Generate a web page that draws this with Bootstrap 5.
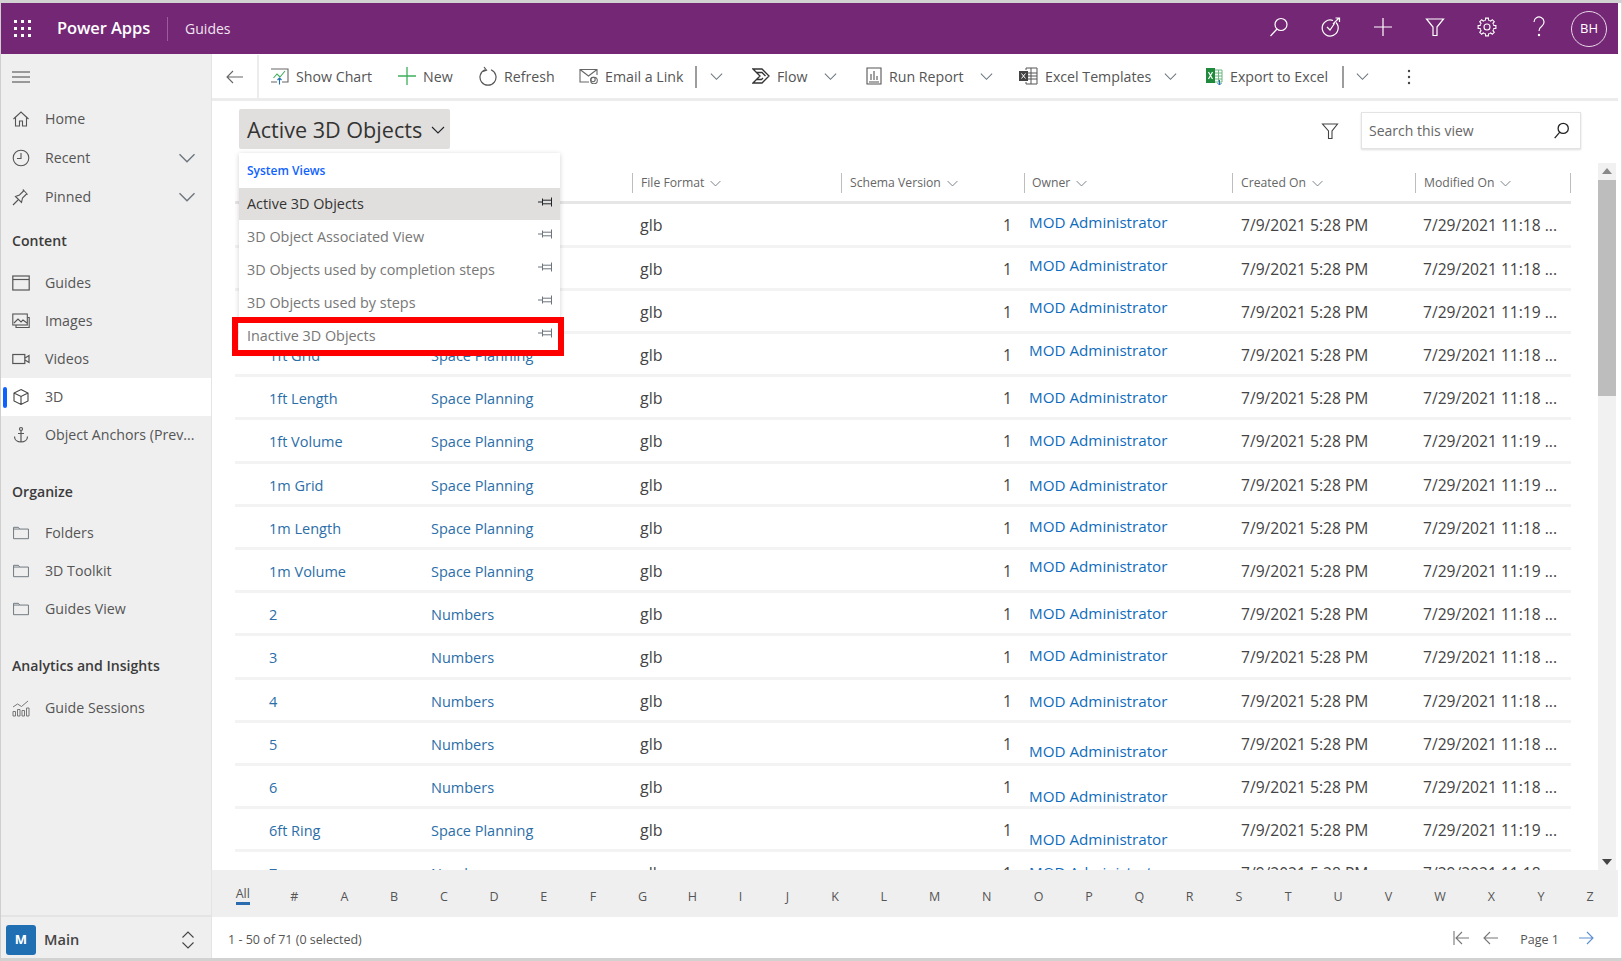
<!DOCTYPE html>
<html lang="en">
<head>
<meta charset="utf-8">
<title>Power Apps - Guides</title>
<link href="https://cdn.jsdelivr.net/npm/bootstrap@5.3.0/dist/css/bootstrap.min.css" rel="stylesheet">
<style>
html,body{margin:0;height:100%;background:#fff;overflow:hidden}
body{font-family:"Open Sans","Noto Sans",sans-serif;color:#444}
svg{display:block;flex:none}
.sprite{position:absolute}
.frame{width:1622px;height:961px;padding:3px 4px 3px 1px;background:#fff;box-shadow:inset 0 3px 0 #d2d2d2,inset 1px 0 0 #cfcfcf,inset 0 -3px 0 #d2d2d2,inset -1px 0 0 #dcdcdc}
.topbar{height:51px;background:#742774;color:#fff;padding-left:13px}
.brand{font-size:16.5px;font-weight:600;margin-left:25px;letter-spacing:-.1px}
.bdiv{width:1px;height:24px;background:#9a5f9a;margin:0 17px 0 17px}
.prod{font-size:14px;color:#f1e4f1}
.hico{width:52px;display:flex;justify-content:center;margin-bottom:3px}
.avatar{width:36px;height:36px;border:1.5px solid #e8d8e8;border-radius:50%;font-size:13px;margin:0 11px 0 6px}
.shell{height:904px}
.side{width:211px;background:#efefef;border-right:1px solid #e4e4e4;flex:none}
.burger{height:46px;padding-left:11px}
.sitem{height:38px;padding-left:11px;font-size:14.2px;color:#555}
.sitem .lbl{margin-left:15px;white-space:nowrap}
.tall{height:39px}
.shead{height:38px;padding-left:11px;font-size:14.1px;font-weight:600;color:#3b3b3b}
.sh1{margin-top:6px;margin-bottom:4px}
.sh2{margin-top:19px;margin-bottom:3px}
.sh3{margin-top:19px;margin-bottom:4px}
.sitem.on{background:#fff;position:relative;padding-left:11px}
.sitem.on::before{content:"";position:absolute;left:2px;top:9px;width:4px;height:21px;border-radius:2px;background:#0f62fe}
.schev{margin-left:auto;margin-right:14px}
.sfoot{height:43px;border-top:2px solid #e4e4e4;padding:5px 0 0 5px}
.mtile{width:30px;height:30px;background:#1f6fb2;color:#fff;border-radius:3px;font-size:13px;font-weight:700}
.mname{font-size:14.6px;font-weight:600;margin-left:8px;color:#444}
.tbar{height:47px;border-bottom:3px solid #ececec;display:grid;grid-template-columns:58px 128px 81px 100px 116px 14px 43px 71px 43px 113px 40px 144px 43px 136px 13px 50px 30px;align-items:center;font-size:14.2px;color:#555;white-space:nowrap;padding-top:1px}
.tcell{display:flex;align-items:center;gap:7px}
.tback{height:43px;border-right:2px solid #ececec;justify-content:center;width:47px}
.tsep{width:2px;height:22px;background:#9d9d9d}
.vhead{height:62px;padding:8px 37px 0 27px}
.vtitle{height:40px;background:#e1dfdd;border-radius:2px;font-size:21.6px;font-weight:500;color:#333;padding:2px 8px 0;gap:8px;width:211px;white-space:nowrap}
.vsearch{width:220px;height:37px;border:1px solid #e3e3e3;box-shadow:0 1px 2px #ddd;padding:0 10px 0 7px;font-size:14px;color:#666;margin-left:22px;margin-top:3px}
.vfilter{margin-top:13px}
.gridwrap{height:708px;overflow:hidden;padding-left:23px}
.scol{width:1336px;flex:none;overflow:hidden}
.gt{table-layout:fixed;width:1336px;margin:0;--bs-table-bg:transparent;--bs-table-color:#444;font-size:15.6px}
.gt th{height:40px;padding:2px 0 0;border-bottom:3px solid #e6e6e6;font-weight:400;font-size:12.2px;color:#666;vertical-align:middle}
.gt th .hc{display:flex;align-items:center;gap:5px;padding-left:8px;border-left:1px solid #bdbdbd;height:20px;white-space:nowrap}
.gt th .hown{padding-left:7px}
.gt th .hl{border-right:1px solid #bdbdbd}
.gt td{height:43.2px;padding:11px 0 0;border-bottom:3px solid #f3f3f3;vertical-align:top;white-space:nowrap;line-height:20px;overflow:hidden}
.gt a{text-decoration:none}
.gt td.cn{padding:12px 0 0 34px;font-size:14.5px}
.gt td.cc{padding:12px 0 0 9px;font-size:14.5px}
.cn a,.cc a{color:#2b6ea8}
.gt td.cf{padding-left:8px;font-size:16px}
.gt td.cs{padding-right:12px;text-align:right}
.gt td.co{padding:10px 0 0 5px;font-size:15.2px}
.co a{color:#0f6cbd}
.gt td.ct{padding-left:9px}
.gt td.cm{padding-left:8px}
.gt td.o-4{padding-top:6px}.gt td.o-3{padding-top:7px}.gt td.o-2{padding-top:8px}.gt td.o-1{padding-top:9px}
.gt td.o1{padding-top:11px}.gt td.o8{padding-top:18px}.gt td.o10{padding-top:20px}
.w187{width:187px}.w210{width:210px}.w209{width:209px}.w183{width:183px}.w208{width:208px}.w156{width:156px}
.vscroll{width:18px;margin-left:27px;height:100%;background:#f1f1f1}
.vthumb{height:216px;background:#bdbdbd}
.varr{height:17px}
.alpha{height:47px;background:#efefef;display:grid;grid-template-columns:51.5px 51.5px 49px 50px 50px 50px 49.5px 49px 50px 49.5px 47px 47px 48px 49.5px 52px 52.5px 51px 50px 50.5px 50px 49px 49.5px 50px 51px 52px 50.5px 49px 49px;padding:8px 0 0 5px;font-size:12.5px;color:#555;text-align:center;align-items:center}
.alpha .allc{line-height:15px;margin-top:-4px}
.alpha .allc span{display:inline-block;border-bottom:3px solid #2b6cb0;padding-bottom:1px}
.pfoot{height:41px;padding:5px 24px 0 16px;font-size:12.5px;color:#555}
.pg{margin-left:auto;gap:14px}
.pgl{margin:0 6px 0 8px}
.pgi{margin-bottom:4px}
.menu{position:absolute;left:239px;top:153px;width:321px;background:#fff;box-shadow:0 1px 5px rgba(0,0,0,.18);z-index:5}
.mhead{height:35px;padding-left:8px;font-size:12px;font-weight:600;color:#0f62fe}
.mitem{height:33px;padding:0 6px 0 8px;font-size:14.4px;color:#777;position:relative}
.mitem.act{background:#e1dfdd;color:#333;height:32px}
.mitem svg{margin-left:auto;margin-top:-5px}
.mitem.hl::after{content:"";position:absolute;left:-7px;right:-4px;top:-2px;height:39px;border:6px solid #f00}
</style>
</head>
<body>
<svg class="sprite" width="0" height="0">
<defs>
<symbol id="chev" viewBox="0 0 16 16"><path d="M2 5l6 6 6-6" fill="none" stroke="currentColor" stroke-width="1.1"/></symbol>
<symbol id="pin" viewBox="0 0 16 12"><path d="M0 6h4.500M4.500 2.500v7M4.500 4.200h9M4.500 7.800h9M13.500 1.500v9" fill="none" stroke="currentColor" stroke-width="1"/></symbol>
<symbol id="fold" viewBox="0 0 20 16"><path d="M1.500 14.500V1.500h5.500l1.500 2h10v11z" fill="none" stroke="currentColor" stroke-width="1.100"/><path d="M1.500 3.500h7" stroke="currentColor"/></symbol>
<path id="tooth" d="M7.320 3.530L8.430 3.180L8.590 1.110H11.410L11.570 3.180L12.680 3.530"/>
</defs>
</svg>
<div class="frame d-flex flex-column">
  <header class="topbar d-flex align-items-center">
    <svg width="18" height="18" viewBox="0 0 18 18" fill="#fff"><rect x="0" y="0" width="3" height="3"/><rect x="7" y="0" width="3" height="3"/><rect x="14" y="0" width="3" height="3"/><rect x="0" y="7" width="3" height="3"/><rect x="7" y="7" width="3" height="3"/><rect x="14" y="7" width="3" height="3"/><rect x="0" y="14" width="3" height="3"/><rect x="7" y="14" width="3" height="3"/><rect x="14" y="14" width="3" height="3"/></svg>
    <span class="brand">Power Apps</span><span class="bdiv"></span><span class="prod">Guides</span>
    <div class="ms-auto d-flex align-items-center">
      <span class="hico"><svg width="20" height="20" viewBox="0 0 20 20" fill="none" stroke="#fff" stroke-width="1.200"><circle cx="12" cy="7.500" r="6"/><path d="M8 12l-6.500 7"/></svg></span>
      <span class="hico"><svg width="22" height="22" viewBox="0 0 22 22" fill="none" stroke="#fff" stroke-width="1.200"><path d="M16 6.500a8 8 0 1 1-3-2"/><path d="M7 11l3 3 4.500-6.500M13 8l6-6M15.500 2H19.500V6"/></svg></span>
      <span class="hico"><svg width="20" height="20" viewBox="0 0 20 20" stroke="#fff" stroke-width="1.200"><path d="M10 1v18M1 10h18"/></svg></span>
      <span class="hico"><svg width="20" height="20" viewBox="0 0 20 20" fill="none" stroke="#fff" stroke-width="1.200"><path d="M1.500 2h17l-6.500 8v8.500h-4V10z"/></svg></span>
      <span class="hico"><svg width="20" height="20" viewBox="0 0 20 20" fill="none" stroke="#fff" stroke-width="1.100"><circle cx="10" cy="10" r="3"/><use href="#tooth"/><use href="#tooth" transform="rotate(45 10 10)"/><use href="#tooth" transform="rotate(90 10 10)"/><use href="#tooth" transform="rotate(135 10 10)"/><use href="#tooth" transform="rotate(180 10 10)"/><use href="#tooth" transform="rotate(225 10 10)"/><use href="#tooth" transform="rotate(270 10 10)"/><use href="#tooth" transform="rotate(315 10 10)"/></svg></span>
      <span class="hico"><svg width="14" height="22" viewBox="0 0 14 22" fill="none" stroke="#fff" stroke-width="1.200"><path d="M2 6a5 5 0 1 1 8 4c-2 1.500-3 2.500-3 5"/><circle cx="7" cy="19" r=".6" fill="#fff"/></svg></span>
      <span class="avatar d-flex align-items-center justify-content-center">BH</span>
    </div>
  </header>
  <div class="shell d-flex">
    <nav class="side d-flex flex-column">
      <div class="burger d-flex align-items-center"><svg width="18" height="12" viewBox="0 0 18 12" stroke="#444" stroke-width="1.200"><path d="M0 1h18M0 6h18M0 11h18"/></svg></div>
      <div class="sitem d-flex align-items-center"><svg width="18" height="18" viewBox="0 0 18 18" fill="none" stroke="#555" stroke-width="1.100"><path d="M1.500 9L9 2l7.500 7M3.500 7.500V16h4v-5h3v5h4V7.500"/></svg><span class="lbl">Home</span></div>
      <div class="sitem tall d-flex align-items-center"><svg width="18" height="18" viewBox="0 0 18 18" fill="none" stroke="#555" stroke-width="1.100"><circle cx="9" cy="9" r="7.800"/><path d="M9 4v5.500H5"/></svg><span class="lbl">Recent</span><svg class="schev text-secondary" width="20" height="20"><use href="#chev"/></svg></div>
      <div class="sitem tall d-flex align-items-center"><svg width="18" height="18" viewBox="0 0 18 18" fill="none" stroke="#555" stroke-width="1.100"><path d="M1 17l5-5M3.500 8.500l6 6 1-4.500 4-4 1 .500-4.500-5 .5 1.500-4 4z"/></svg><span class="lbl">Pinned</span><svg class="schev text-secondary" width="20" height="20"><use href="#chev"/></svg></div>
      <div class="shead sh1 d-flex align-items-center">Content</div>
      <div class="sitem d-flex align-items-center"><svg width="18" height="16" viewBox="0 0 18 16" fill="none" stroke="#555" stroke-width="1.200"><rect x=".8" y="1" width="16.400" height="14"/><path d="M1 4.500h16"/></svg><span class="lbl">Guides</span></div>
      <div class="sitem d-flex align-items-center"><svg width="18" height="16" viewBox="0 0 18 16" fill="none" stroke="#555" stroke-width="1.100"><rect x=".8" y="1" width="14.500" height="11"/><path d="M2 10l4-4 3 3 2-2 4 3M15.500 4.500h1.700v10H4V12"/></svg><span class="lbl">Images</span></div>
      <div class="sitem d-flex align-items-center"><svg width="18" height="12" viewBox="0 0 18 12" fill="none" stroke="#555" stroke-width="1.200"><rect x=".8" y="1.500" width="12" height="9"/><path d="M13 5l4-2.500v7L13 7"/></svg><span class="lbl">Videos</span></div>
      <div class="sitem on d-flex align-items-center"><svg width="18" height="18" viewBox="0 0 18 18" fill="none" stroke="#444" stroke-width="1.100"><path d="M9 1.500l7 3.500v8l-7 3.500-7-3.500V5zM2 5l7 3.500L16 5M9 8.500v8"/></svg><span class="lbl">3D</span></div>
      <div class="sitem d-flex align-items-center"><svg width="18" height="18" viewBox="0 0 18 18" fill="none" stroke="#555" stroke-width="1.200"><circle cx="9" cy="3" r="1.500"/><path d="M9 4.500V16M6 7.500h6M2.500 10.500c0 3.500 3 5.500 6.500 5.500s6.500-2 6.500-5.500"/></svg><span class="lbl">Object Anchors (Prev...</span></div>
      <div class="shead sh2 d-flex align-items-center">Organize</div>
      <div class="sitem d-flex align-items-center"><svg class="text-secondary" width="18" height="14"><use href="#fold"/></svg><span class="lbl">Folders</span></div>
      <div class="sitem d-flex align-items-center"><svg class="text-secondary" width="18" height="14"><use href="#fold"/></svg><span class="lbl">3D Toolkit</span></div>
      <div class="sitem d-flex align-items-center"><svg class="text-secondary" width="18" height="14"><use href="#fold"/></svg><span class="lbl">Guides View</span></div>
      <div class="shead sh3 d-flex align-items-center">Analytics and Insights</div>
      <div class="sitem d-flex align-items-center"><svg width="18" height="18" viewBox="0 0 18 18" fill="none" stroke="#777" stroke-width="1"><path d="M1 12.500h2.500V17H1zM5.500 10.500H8V17H5.500zM10 11.500h2.500V17H10zM14.500 9H17v8h-2.500zM1 8l4.500-3 4 2.500L16 2"/></svg><span class="lbl">Guide Sessions</span></div>
      <div class="sfoot mt-auto d-flex align-items-center">
        <span class="mtile d-flex align-items-center justify-content-center">M</span><span class="mname">Main</span>
        <svg class="ms-auto me-3" width="14" height="20" viewBox="0 0 14 20" fill="none" stroke="#444" stroke-width="1.100"><path d="M1.500 7.500L7 2l5.500 5.500M1.500 12.500L7 18l5.500-5.500"/></svg>
      </div>
    </nav>
    <main class="flex-grow-1 d-flex flex-column position-relative">
      <div class="tbar">
        <div class="tcell tback"><svg width="18" height="14" viewBox="0 0 18 14" fill="none" stroke="#666" stroke-width="1.100"><path d="M7 1L1 7l6 6M1 7h16"/></svg></div>
        <div class="tcell"><svg width="19" height="17" viewBox="0 0 19 17" fill="none" stroke="#666" stroke-width="1.100"><path d="M1 1h17v13H12M7 14H1z"/><path d="M3.500 10l3.500-4 3 3 5-6" stroke="#3fae5b"/><path d="M9.500 16.500V10M7.500 12l2-2 2 2" stroke="#1f6fb2"/></svg><span>Show Chart</span></div>
        <div class="tcell"><svg width="18" height="18" viewBox="0 0 18 18" stroke="#3fae5b" stroke-width="1.300"><path d="M9 0v18M0 9h18"/></svg><span>New</span></div>
        <div class="tcell"><svg width="18" height="20" viewBox="0 0 18 20" fill="none" stroke="#555" stroke-width="1.200"><path d="M6 3.800a8 8 0 1 0 6 0M5 1l2.500 3.200L4 5.500"/></svg><span>Refresh</span></div>
        <div class="tcell"><svg width="19" height="16" viewBox="0 0 19 16" fill="none" stroke="#666" stroke-width="1.100"><path d="M10 14H1V1.500h17V7M1 1.500l8.500 6.500 8.500-6.500"/><circle cx="14" cy="11.500" r="2.200"/><circle cx="15" cy="12.500" r="3.300"/></svg><span>Email a Link</span></div>
        <div class="tcell"><span class="tsep"></span></div>
        <div class="tcell"><svg class="text-secondary" width="15" height="15"><use href="#chev"/></svg></div>
        <div class="tcell"><svg width="18" height="16" viewBox="0 0 18 16" fill="none" stroke="#333" stroke-width="1.300"><path d="M1 1h9l7 7-7 7H1l7-7zM4 4.500h6l3.500 3.500M4.500 11.500h5L11 10"/></svg><span>Flow</span></div>
        <div class="tcell"><svg class="text-secondary" width="15" height="15"><use href="#chev"/></svg></div>
        <div class="tcell"><svg width="16" height="18" viewBox="0 0 16 18" fill="none" stroke="#555" stroke-width="1.100"><path d="M1 1h14v16H1zM5 13V7M8 13V4M11 13V9M3 15h10"/></svg><span>Run Report</span></div>
        <div class="tcell"><svg class="text-secondary" width="15" height="15"><use href="#chev"/></svg></div>
        <div class="tcell"><svg width="19" height="18" viewBox="0 0 19 18" fill="none" stroke="#555"><path d="M7 3V1h11v16H7v-2M7 6h11M7 9h11M7 12h11M12 1v16"/><rect x="0" y="4" width="9" height="10" fill="#444" stroke="none"/><path d="M2.500 6.500l4 5M6.500 6.500l-4 5" stroke="#fff"/></svg><span>Excel Templates</span></div>
        <div class="tcell"><svg class="text-secondary" width="15" height="15"><use href="#chev"/></svg></div>
        <div class="tcell"><svg width="17" height="19" viewBox="0 0 17 19" fill="none"><rect x="0" y="1" width="9" height="15" fill="#1f8a3b"/><path d="M2.500 5l4 7M6.500 5l-4 7" stroke="#fff" stroke-width="1.200"/><path d="M9 3h7v12H9M9 6h7M9 9h7M9 12h7M12.500 3v12" stroke="#6bb57f"/><path d="M13.500 13v5M11.500 16l2 2 2-2" stroke="#1f6fb2"/></svg><span>Export to Excel</span></div>
        <div class="tcell"><span class="tsep"></span></div>
        <div class="tcell"><svg class="text-secondary" width="15" height="15"><use href="#chev"/></svg></div>
        <div class="tcell"><svg width="8" height="16" viewBox="0 0 8 16" fill="#444"><circle cx="4" cy="2" r="1.200"/><circle cx="4" cy="8" r="1.200"/><circle cx="4" cy="14" r="1.200"/></svg></div>
      </div>
      <div class="vhead d-flex align-items-start">
        <div class="vtitle d-flex align-items-center"><span>Active 3D Objects</span><svg width="16" height="16" class="text-dark"><use href="#chev"/></svg></div>
        <div class="ms-auto vfilter"><svg width="18" height="18" viewBox="0 0 18 18" fill="none" stroke="#444" stroke-width="1.100"><path d="M1.500 2h15l-5.500 7v7.500H7.500V9z"/></svg></div>
        <div class="vsearch d-flex align-items-center justify-content-between"><span>Search this view</span><svg width="17" height="17" viewBox="0 0 20 20" fill="none" stroke="#222" stroke-width="1.500"><circle cx="12" cy="7.500" r="6"/><path d="M8 12l-6 7"/></svg></div>
      </div>
      <div class="gridwrap d-flex">
        <div class="scol">
          <table class="table gt">
            <colgroup><col class="w187"><col class="w210"><col class="w209"><col class="w183"><col class="w208"><col class="w183"><col class="w156"></colgroup>
            <thead><tr>
              <th></th><th></th>
              <th><div class="hc">File Format <svg class="text-secondary" width="13" height="13"><use href="#chev"/></svg></div></th>
              <th><div class="hc">Schema Version <svg class="text-secondary" width="13" height="13"><use href="#chev"/></svg></div></th>
              <th><div class="hc hown">Owner <svg class="text-secondary" width="13" height="13"><use href="#chev"/></svg></div></th>
              <th><div class="hc">Created On <svg class="text-secondary" width="13" height="13"><use href="#chev"/></svg></div></th>
              <th><div class="hc hl">Modified On <svg class="text-secondary" width="13" height="13"><use href="#chev"/></svg></div></th>
            </tr></thead>
            <tbody>
              <tr><td class="cn"></td><td class="cc"></td><td class="cf">glb</td><td class="cs">1</td><td class="co o-2"><a href="#">MOD Administrator</a></td><td class="ct">7/9/2021 5:28 PM</td><td class="cm">7/29/2021 11:18 ...</td></tr>
              <tr><td class="cn"></td><td class="cc"></td><td class="cf">glb</td><td class="cs">1</td><td class="co o-3"><a href="#">MOD Administrator</a></td><td class="ct">7/9/2021 5:28 PM</td><td class="cm">7/29/2021 11:18 ...</td></tr>
              <tr><td class="cn"></td><td class="cc"></td><td class="cf">glb</td><td class="cs">1</td><td class="co o-4"><a href="#">MOD Administrator</a></td><td class="ct">7/9/2021 5:28 PM</td><td class="cm">7/29/2021 11:19 ...</td></tr>
              <tr><td class="cn"><a href="#">1ft Grid</a></td><td class="cc"><a href="#">Space Planning</a></td><td class="cf">glb</td><td class="cs">1</td><td class="co o-4"><a href="#">MOD Administrator</a></td><td class="ct">7/9/2021 5:28 PM</td><td class="cm">7/29/2021 11:18 ...</td></tr>
              <tr><td class="cn"><a href="#">1ft Length</a></td><td class="cc"><a href="#">Space Planning</a></td><td class="cf">glb</td><td class="cs">1</td><td class="co"><a href="#">MOD Administrator</a></td><td class="ct">7/9/2021 5:28 PM</td><td class="cm">7/29/2021 11:18 ...</td></tr>
              <tr><td class="cn"><a href="#">1ft Volume</a></td><td class="cc"><a href="#">Space Planning</a></td><td class="cf">glb</td><td class="cs">1</td><td class="co"><a href="#">MOD Administrator</a></td><td class="ct">7/9/2021 5:28 PM</td><td class="cm">7/29/2021 11:19 ...</td></tr>
              <tr><td class="cn"><a href="#">1m Grid</a></td><td class="cc"><a href="#">Space Planning</a></td><td class="cf">glb</td><td class="cs">1</td><td class="co o1"><a href="#">MOD Administrator</a></td><td class="ct">7/9/2021 5:28 PM</td><td class="cm">7/29/2021 11:19 ...</td></tr>
              <tr><td class="cn"><a href="#">1m Length</a></td><td class="cc"><a href="#">Space Planning</a></td><td class="cf">glb</td><td class="cs">1</td><td class="co o-1"><a href="#">MOD Administrator</a></td><td class="ct">7/9/2021 5:28 PM</td><td class="cm">7/29/2021 11:18 ...</td></tr>
              <tr><td class="cn"><a href="#">1m Volume</a></td><td class="cc"><a href="#">Space Planning</a></td><td class="cf">glb</td><td class="cs">1</td><td class="co o-4"><a href="#">MOD Administrator</a></td><td class="ct">7/9/2021 5:28 PM</td><td class="cm">7/29/2021 11:19 ...</td></tr>
              <tr><td class="cn"><a href="#">2</a></td><td class="cc"><a href="#">Numbers</a></td><td class="cf">glb</td><td class="cs">1</td><td class="co"><a href="#">MOD Administrator</a></td><td class="ct">7/9/2021 5:28 PM</td><td class="cm">7/29/2021 11:18 ...</td></tr>
              <tr><td class="cn"><a href="#">3</a></td><td class="cc"><a href="#">Numbers</a></td><td class="cf">glb</td><td class="cs">1</td><td class="co o-1"><a href="#">MOD Administrator</a></td><td class="ct">7/9/2021 5:28 PM</td><td class="cm">7/29/2021 11:18 ...</td></tr>
              <tr><td class="cn"><a href="#">4</a></td><td class="cc"><a href="#">Numbers</a></td><td class="cf">glb</td><td class="cs">1</td><td class="co o1"><a href="#">MOD Administrator</a></td><td class="ct">7/9/2021 5:28 PM</td><td class="cm">7/29/2021 11:18 ...</td></tr>
              <tr><td class="cn"><a href="#">5</a></td><td class="cc"><a href="#">Numbers</a></td><td class="cf">glb</td><td class="cs">1</td><td class="co o8"><a href="#">MOD Administrator</a></td><td class="ct">7/9/2021 5:28 PM</td><td class="cm">7/29/2021 11:18 ...</td></tr>
              <tr><td class="cn"><a href="#">6</a></td><td class="cc"><a href="#">Numbers</a></td><td class="cf">glb</td><td class="cs">1</td><td class="co o10"><a href="#">MOD Administrator</a></td><td class="ct">7/9/2021 5:28 PM</td><td class="cm">7/29/2021 11:18 ...</td></tr>
              <tr><td class="cn"><a href="#">6ft Ring</a></td><td class="cc"><a href="#">Space Planning</a></td><td class="cf">glb</td><td class="cs">1</td><td class="co o10"><a href="#">MOD Administrator</a></td><td class="ct">7/9/2021 5:28 PM</td><td class="cm">7/29/2021 11:19 ...</td></tr>
              <tr><td class="cn"><a href="#">7</a></td><td class="cc"><a href="#">Numbers</a></td><td class="cf">glb</td><td class="cs">1</td><td class="co"><a href="#">MOD Administrator</a></td><td class="ct">7/9/2021 5:28 PM</td><td class="cm">7/29/2021 11:18 ...</td></tr>
            </tbody>
          </table>
        </div>
        <div class="vscroll d-flex flex-column">
          <div class="varr d-flex align-items-center justify-content-center"><svg width="10" height="6" viewBox="0 0 10 6" fill="#888"><path d="M5 0l5 6H0z"/></svg></div>
          <div class="vthumb"></div>
          <div class="varr d-flex align-items-center justify-content-center mt-auto"><svg width="10" height="6" viewBox="0 0 10 6" fill="#444"><path d="M0 0h10L5 6z"/></svg></div>
        </div>
      </div>
      <div class="alpha">
        <div class="allc"><span>All</span></div><div>#</div><div>A</div><div>B</div><div>C</div><div>D</div><div>E</div><div>F</div><div>G</div><div>H</div><div>I</div><div>J</div><div>K</div><div>L</div><div>M</div><div>N</div><div>O</div><div>P</div><div>Q</div><div>R</div><div>S</div><div>T</div><div>U</div><div>V</div><div>W</div><div>X</div><div>Y</div><div>Z</div>
      </div>
      <div class="pfoot d-flex align-items-center">
        <span>1 - 50 of 71 (0 selected)</span>
        <div class="pg d-flex align-items-center">
          <svg class="pgi" width="16" height="14" viewBox="0 0 16 14" fill="none" stroke="#777" stroke-width="1.100"><path d="M1 0v14M9 1L3 7l6 6M3 7h13"/></svg>
          <svg class="pgi" width="15" height="14" viewBox="0 0 15 14" fill="none" stroke="#777" stroke-width="1.100"><path d="M7 1L1 7l6 6M1 7h14"/></svg>
          <span class="pgl">Page 1</span>
          <svg class="pgi" width="15" height="14" viewBox="0 0 15 14" fill="none" stroke="#5c8fd0" stroke-width="1.100"><path d="M8 1l6 6-6 6M14 7H0"/></svg>
        </div>
      </div>
    </main>
  </div>
</div>
<div class="menu">
  <div class="mhead d-flex align-items-center">System Views</div>
  <div class="mitem act d-flex align-items-center">Active 3D Objects<svg class="text-dark" width="16" height="12"><use href="#pin"/></svg></div>
  <div class="mitem d-flex align-items-center">3D Object Associated View<svg class="text-secondary" width="16" height="12"><use href="#pin"/></svg></div>
  <div class="mitem d-flex align-items-center">3D Objects used by completion steps<svg class="text-secondary" width="16" height="12"><use href="#pin"/></svg></div>
  <div class="mitem d-flex align-items-center">3D Objects used by steps<svg class="text-secondary" width="16" height="12"><use href="#pin"/></svg></div>
  <div class="mitem hl d-flex align-items-center">Inactive 3D Objects<svg class="text-secondary" width="16" height="12"><use href="#pin"/></svg></div>
</div>
</body>
</html>
